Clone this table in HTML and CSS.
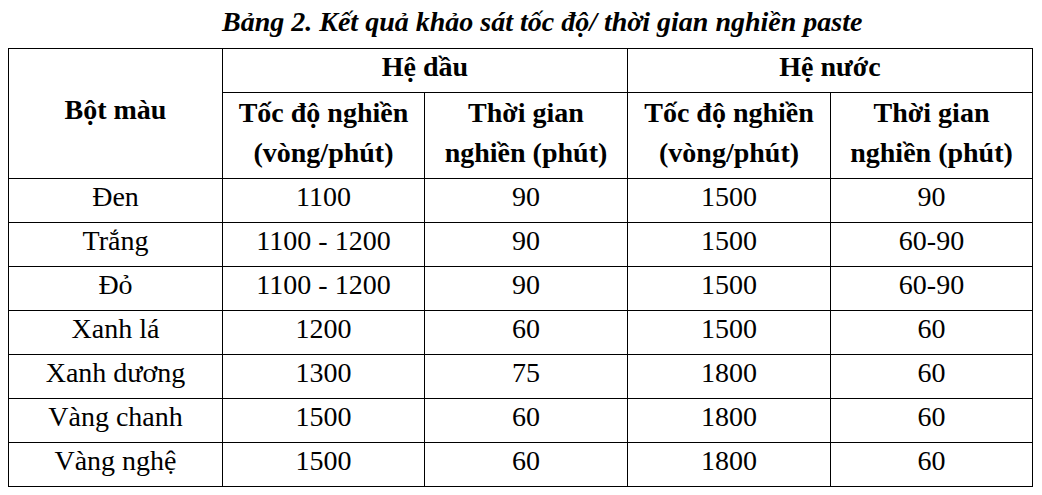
FILE: index.html
```html
<!DOCTYPE html>
<html lang="vi">
<head>
<meta charset="utf-8">
<title>Bảng 2</title>
<link rel="stylesheet" href="styles.css">
</head>
<body>
<div class="page">
  <h1 class="caption">Bảng 2. Kết quả khảo sát tốc độ/ thời gian nghiền paste</h1>
  <table class="data">
    <colgroup>
      <col class="c1"><col class="c2"><col class="c3"><col class="c4"><col class="c5">
    </colgroup>
    <thead>
      <tr>
        <th rowspan="2" class="pig">Bột màu</th>
        <th colspan="2" class="grp">Hệ dầu</th>
        <th colspan="2" class="grp">Hệ nước</th>
      </tr>
      <tr>
        <th class="sub">Tốc độ nghiền<br>(vòng/phút)</th>
        <th class="sub">Thời gian<br>nghiền (phút)</th>
        <th class="sub">Tốc độ nghiền<br>(vòng/phút)</th>
        <th class="sub">Thời gian<br>nghiền (phút)</th>
      </tr>
    </thead>
    <tbody>
      <tr><td>Đen</td><td>1100</td><td>90</td><td>1500</td><td>90</td></tr>
      <tr><td>Trắng</td><td>1100 - 1200</td><td>90</td><td>1500</td><td>60-90</td></tr>
      <tr><td>Đỏ</td><td>1100 - 1200</td><td>90</td><td>1500</td><td>60-90</td></tr>
      <tr><td>Xanh lá</td><td>1200</td><td>60</td><td>1500</td><td>60</td></tr>
      <tr><td>Xanh dương</td><td>1300</td><td>75</td><td>1800</td><td>60</td></tr>
      <tr><td>Vàng chanh</td><td>1500</td><td>60</td><td>1800</td><td>60</td></tr>
      <tr><td>Vàng nghệ</td><td>1500</td><td>60</td><td>1800</td><td>60</td></tr>
    </tbody>
  </table>
</div>
</body>
</html>
```

FILE: styles.css
```css
html, body {
  margin: 0;
  padding: 0;
  background: #ffffff;
}
.page {
  padding: 0 0 0 8px;
  font-family: "Liberation Serif", "Times New Roman", serif;
  color: #000000;
}
.caption {
  margin: 0;
  height: 48px;
  box-sizing: border-box;
  padding: 5px 0 0 214px;
  font-family: "Liberation Serif", "Times New Roman", serif;
  font-size: 28px;
  line-height: 34px;
  font-weight: bold;
  font-style: italic;
  text-align: left;
  white-space: nowrap;
}
.data {
  border-collapse: collapse;
  table-layout: fixed;
  width: 1024px;
  font-family: "Liberation Serif", "Times New Roman", serif;
  font-size: 28px;
  color: #000000;
}
.c1 { width: 214px; }
.c2 { width: 202px; }
.c3 { width: 203px; }
.c4 { width: 203px; }
.c5 { width: 202px; }
.data th, .data td {
  font-family: "Liberation Serif", "Times New Roman", serif;
  border: 1px solid #000000;
  text-align: center;
  vertical-align: middle;
}
.data th {
  font-weight: bold;
}
.data td,
.data .grp,
.data .pig {
  line-height: 35px;
  padding: 0 0 8px;
}
.data .sub {
  line-height: 40px;
  padding: 0 0 5px;
}
```
